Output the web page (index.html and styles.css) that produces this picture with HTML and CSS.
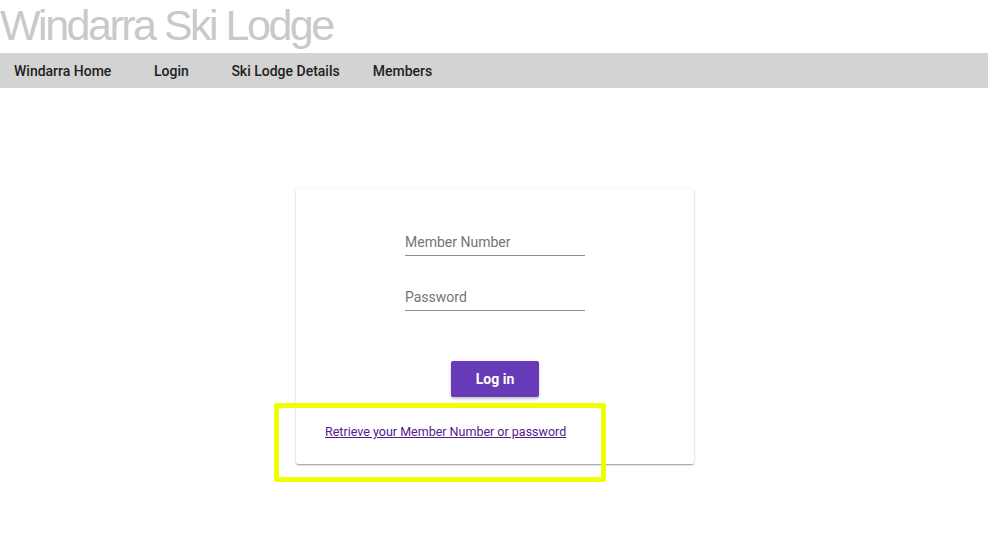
FILE: index.html
```html
<!DOCTYPE html>
<html lang="en">
<head>
  <meta charset="UTF-8" />
  <meta name="viewport" content="width=device-width, initial-scale=1.0" />
  <title>Windarra Ski Lodge - Login</title>
  <link rel="stylesheet" href="styles.css">
</head>
<body>
  <h1 class="site-title">Windarra Ski Lodge</h1>

  <nav class="topnav">
    <a href="#">Windarra Home</a>
    <a href="#">Login</a>
    <a href="#">Ski Lodge Details</a>
    <a href="#">Members</a>
  </nav>

  <main class="page">
    <div class="login-card">
      <form class="login-form">
        <input type="text" id="member" placeholder="Member Number" />
        <input type="password" id="password" placeholder="Password" />
        <button type="submit">Log in</button>
      </form>
      <p class="retrieve"><a href="#">Retrieve your Member Number or password</a></p>
      <div class="highlight"></div>
    </div>
  </main>
</body>
</html>
```

FILE: styles.css
```css
body {
  margin: 0;
  background: #fff;
  font-family: Roboto, "Liberation Sans", sans-serif;
}
.site-title {
  margin: 0;
  height: 53px;
  font-family: "Liberation Sans", Arial, sans-serif;
  font-weight: normal;
  font-size: 43px;
  line-height: 50px;
  letter-spacing: -2.5px;
  color: #c9c9c9;
}
.topnav {
  display: flex;
  height: 35px;
  align-items: center;
  background: #d3d3d3;
  padding-left: 0;
}
.topnav a {
  min-width: 88px;
  box-sizing: border-box;
  padding: 0 16px;
  text-align: center;
  font-size: 14px;
  font-weight: 500;
  color: #212121;
  text-decoration: none;
}
.topnav a:first-child {
  margin-left: -2px;
}
.topnav a:last-child {
  margin-left: 1px;
}
.page {
  padding: 101px 0 94px 2px;
}
.login-card {
  position: relative;
  width: 398px;
  margin: 0 auto;
  box-sizing: border-box;
  padding: 43px 29px 24px;
  background: #fff;
  border-radius: 2px;
  box-shadow: 0 1px 3px rgba(0, 0, 0, 0.2), 0 1px 1px rgba(0, 0, 0, 0.14), 0 2px 1px -1px rgba(0, 0, 0, 0.12);
}
.login-form {
  display: flex;
  flex-direction: column;
  align-items: center;
}
.login-form input {
  width: 180px;
  box-sizing: border-box;
  border: none;
  border-bottom: 1px solid #8c8c8c;
  padding: 0 0 3px;
  margin: 0 0 31px;
  font-family: Roboto, sans-serif;
  font-size: 14px;
  line-height: 20px;
  color: #212121;
  outline: none;
}
.login-form input::placeholder {
  color: #757575;
}
.login-form input:last-of-type {
  margin-bottom: 50px;
}
.login-form button {
  width: 88px;
  height: 36px;
  border: none;
  border-radius: 2px;
  background: #673ab7;
  color: #fff;
  font-family: Roboto, sans-serif;
  font-size: 14px;
  font-weight: 700;
  box-shadow: 0 2px 2px rgba(0, 0, 0, 0.14), 0 1px 5px rgba(0, 0, 0, 0.12);
}
.retrieve {
  margin: 27px 0 0;
  font-size: 12.5px;
  line-height: 16px;
}
.retrieve a {
  color: #551a8b;
}
.highlight {
  position: absolute;
  left: -22px;
  top: 214px;
  width: 332px;
  height: 79px;
  box-sizing: border-box;
  border: 5px solid #f0ff00;
  border-radius: 2px;
}
```
